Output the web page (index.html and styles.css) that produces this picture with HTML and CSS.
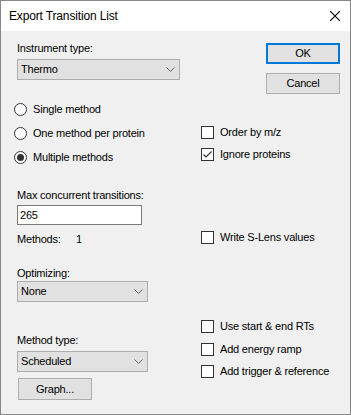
FILE: index.html
```html
<!DOCTYPE html>
<html>
<head>
<meta charset="utf-8">
<link rel="stylesheet" href="styles.css">
</head>
<body>
<div class="window">
  <div class="titlebar">
    <span class="title">Export Transition List</span>
    <svg class="close" width="10" height="10" viewBox="0 0 10 10"><path d="M0 0L10 10M10 0L0 10" stroke="#000" stroke-width="1.1" fill="none"/></svg>
  </div>
  <div class="content">
    <div class="col left">
      <div class="lbl lbl-instr">Instrument type:</div>
      <div class="combo combo-wide combo-instr"><span>Thermo</span><svg class="chev" width="9" height="5" viewBox="0 0 9 5"><path d="M0.5 0.5L4.5 4.5L8.5 0.5" stroke="#606060" fill="none"/></svg></div>
      <div class="radios">
        <div class="radio"><svg width="13" height="13" viewBox="0 0 13 13"><circle cx="6.5" cy="6.5" r="6" fill="#fff" stroke="#333"/></svg><span>Single method</span></div>
        <div class="radio"><svg width="13" height="13" viewBox="0 0 13 13"><circle cx="6.5" cy="6.5" r="6" fill="#fff" stroke="#333"/></svg><span>One method per protein</span></div>
        <div class="radio"><svg width="13" height="13" viewBox="0 0 13 13"><circle cx="6.5" cy="6.5" r="6" fill="#fff" stroke="#333"/><circle cx="6.5" cy="6.5" r="3.5" fill="#333"/></svg><span>Multiple methods</span></div>
      </div>
      <div class="lbl lbl-max">Max concurrent transitions:</div>
      <div class="textbox">265</div>
      <div class="lbl methods"><span class="methods-key">Methods:</span><span>1</span></div>
      <div class="lbl lbl-opt">Optimizing:</div>
      <div class="combo combo-narrow combo-opt"><span>None</span><svg class="chev" width="9" height="5" viewBox="0 0 9 5"><path d="M0.5 0.5L4.5 4.5L8.5 0.5" stroke="#606060" fill="none"/></svg></div>
      <div class="lbl lbl-mt">Method type:</div>
      <div class="combo combo-narrow combo-mt"><span>Scheduled</span><svg class="chev" width="9" height="5" viewBox="0 0 9 5"><path d="M0.5 0.5L4.5 4.5L8.5 0.5" stroke="#606060" fill="none"/></svg></div>
      <div class="btn btn-graph">Graph...</div>
    </div>
    <div class="col right">
      <div class="btn btn-ok">OK</div>
      <div class="btn btn-cancel">Cancel</div>
      <div class="chk chk-order"><span class="box"></span><span>Order by m/z</span></div>
      <div class="chk chk-ignore"><span class="box"><svg width="11" height="11" viewBox="0 0 11 11"><path d="M1.5 5.5L4 8L9.5 2.5" stroke="#333" stroke-width="1.2" fill="none"/></svg></span><span>Ignore proteins</span></div>
      <div class="chk chk-slens"><span class="box"></span><span>Write S-Lens values</span></div>
      <div class="chk chk-rt"><span class="box"></span><span>Use start &amp; end RTs</span></div>
      <div class="chk chk-ramp"><span class="box"></span><span>Add energy ramp</span></div>
      <div class="chk chk-trig"><span class="box"></span><span>Add trigger &amp; reference</span></div>
    </div>
  </div>
</div>
</body>
</html>
```
FILE: styles.css
```css
html, body {
  margin: 0;
  padding: 0;
  background: #f0f0f0;
}

.window {
  width: 351px;
  height: 415px;
  box-sizing: border-box;
  border: 1px solid #888;
  background: #f0f0f0;
  font-family: "Liberation Sans", Arial, sans-serif;
  font-size: 11px;
  letter-spacing: -0.2px;
  color: #000;
  display: flex;
  flex-direction: column;
}

.titlebar {
  height: 30px;
  flex: none;
  background: #fff;
  display: flex;
  align-items: center;
  padding: 0 10px 0 8px;
}

.title {
  font-size: 12px;
  letter-spacing: -0.15px;
}

.close {
  margin-left: auto;
  display: block;
}

.content {
  flex: 1;
  display: flex;
}

.col {
  display: flex;
  flex-direction: column;
  align-items: flex-start;
}

.left {
  width: 184px;
  padding-left: 16px;
}

.right {
  flex: 1;
}

.lbl {
  height: 13px;
  line-height: 13px;
  white-space: nowrap;
}

.lbl-instr { margin-top: 11px; }
.lbl-max { margin-top: 20px; }
.lbl-opt { margin-top: 21px; }
.lbl-mt { margin-top: 32px; }

.combo {
  height: 21px;
  box-sizing: border-box;
  border: 1px solid #adadad;
  background: #e1e1e1;
  display: flex;
  align-items: center;
  justify-content: space-between;
  padding: 0 4px 0 3px;
  line-height: 13px;
}

.combo-wide { width: 163px; }
.combo-narrow { width: 131px; }

.combo-instr { margin-top: 4px; }
.combo-opt { margin-top: 1px; }
.combo-mt { margin-top: 4px; }

.chev { display: block; }

.radios {
  margin-top: 17px;
  margin-left: -3px;
  display: flex;
  flex-direction: column;
}

.radio {
  height: 24px;
  display: flex;
  align-items: center;
  gap: 6px;
  line-height: 13px;
  white-space: nowrap;
}

.radio svg { display: block; }

.textbox {
  margin-top: 3px;
  width: 125px;
  height: 20px;
  box-sizing: border-box;
  border: 1px solid #7a7a7a;
  background: #fff;
  padding-left: 2px;
  line-height: 18px;
}

.methods {
  margin-top: 8px;
  display: flex;
}

.methods-key {
  width: 59px;
}

.btn {
  width: 74px;
  height: 21px;
  box-sizing: border-box;
  border: 1px solid #adadad;
  background: #e1e1e1;
  display: flex;
  align-items: center;
  justify-content: center;
  line-height: 13px;
}

.btn-ok {
  margin-top: 12px;
  margin-left: 65px;
  border: 2px solid #0078d7;
}

.btn-cancel {
  margin-top: 9px;
  margin-left: 65px;
}

.btn-graph {
  margin-top: 6px;
  margin-left: 1px;
  height: 22px;
}

.chk {
  height: 13px;
  display: flex;
  align-items: center;
  gap: 6px;
  line-height: 13px;
  white-space: nowrap;
}

.box {
  width: 13px;
  height: 13px;
  box-sizing: border-box;
  border: 1px solid #333;
  background: #fff;
  display: flex;
  align-items: center;
  justify-content: center;
  flex: none;
}

.box svg { display: block; }

.chk-order { margin-top: 32px; }
.chk-ignore { margin-top: 9px; }
.chk-slens { margin-top: 70px; }
.chk-rt { margin-top: 76px; }
.chk-ramp { margin-top: 10px; }
.chk-trig { margin-top: 9px; }
```
